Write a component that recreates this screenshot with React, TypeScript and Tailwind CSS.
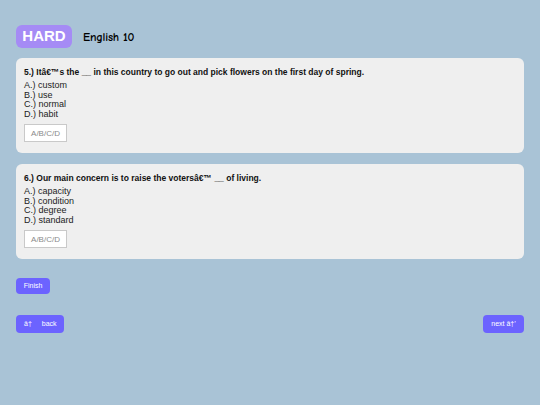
import React from "react";

type Question = {
  num: number;
  text: string;
  options: string[];
};

const questions: Question[] = [
  {
    num: 5,
    text: "Itâ€™s the __ in this country to go out and pick flowers on the first day of spring.",
    options: ["custom", "use", "normal", "habit"],
  },
  {
    num: 6,
    text: "Our main concern is to raise the votersâ€™ __ of living.",
    options: ["capacity", "condition", "degree", "standard"],
  },
];

const letters = ["A", "B", "C", "D"];

const QuestionCard = ({ q }: { q: Question }) => {
  return (
    <div className="bg-[#efefef] rounded-[6px] px-2 pt-[9px] h-[95px]">
      <p className="font-bold text-[8.5px] leading-[11px] text-[#111]">
        {q.num}.) {q.text}
      </p>
      <div className="mt-[3px] text-[9px] leading-[9.6px] text-[#222]">
        {q.options.map((opt, i) => (
          <div key={i}>
            {letters[i]}.) {opt}
          </div>
        ))}
      </div>
      <input
        className="mt-[5px] block w-[43px] h-[18px] border border-[#c9c9c9] bg-white text-center text-[8px] placeholder:text-[#8a8a8a] outline-none"
        placeholder="A/B/C/D"
      />
    </div>
  );
};

export default function App() {
  return (
    <div
      className="w-[540px] h-[405px] bg-[#a9c3d6] px-4 pt-[25px] overflow-hidden"
      style={{ fontFamily: '"Liberation Sans", Arial, sans-serif' }}
    >
      <div className="flex items-center gap-[11px] h-[23px]">
        <span className="bg-[#a58bf5] text-white font-bold text-[15px] rounded-[6px] w-[56px] h-[23px] flex items-center justify-center">
          HARD
        </span>
        <span className="text-[12px] text-black font-['Comic_Neue','DejaVu_Sans',sans-serif] font-bold tracking-[-0.2px]">
          English 10
        </span>
      </div>

      <div className="mt-[10px] flex flex-col gap-[11px]">
        {questions.map((q) => (
          <QuestionCard key={q.num} q={q} />
        ))}
      </div>

      <button className="mt-[19px] block bg-[#6c63ff] text-white text-[7px] rounded-[4px] w-[34px] h-[16px]">
        Finish
      </button>

      <div className="mt-[21px] flex justify-between">
        <button className="bg-[#6c63ff] text-white text-[7px] rounded-[4px] w-[48px] h-[18px] flex items-center pl-[8px] gap-[10px]">
          <span>â†</span>
          <span>back</span>
        </button>
        <button className="bg-[#6c63ff] text-white text-[7px] rounded-[4px] w-[41px] h-[18px] flex items-center justify-center">
          next â†’
        </button>
      </div>
    </div>
  );
}
